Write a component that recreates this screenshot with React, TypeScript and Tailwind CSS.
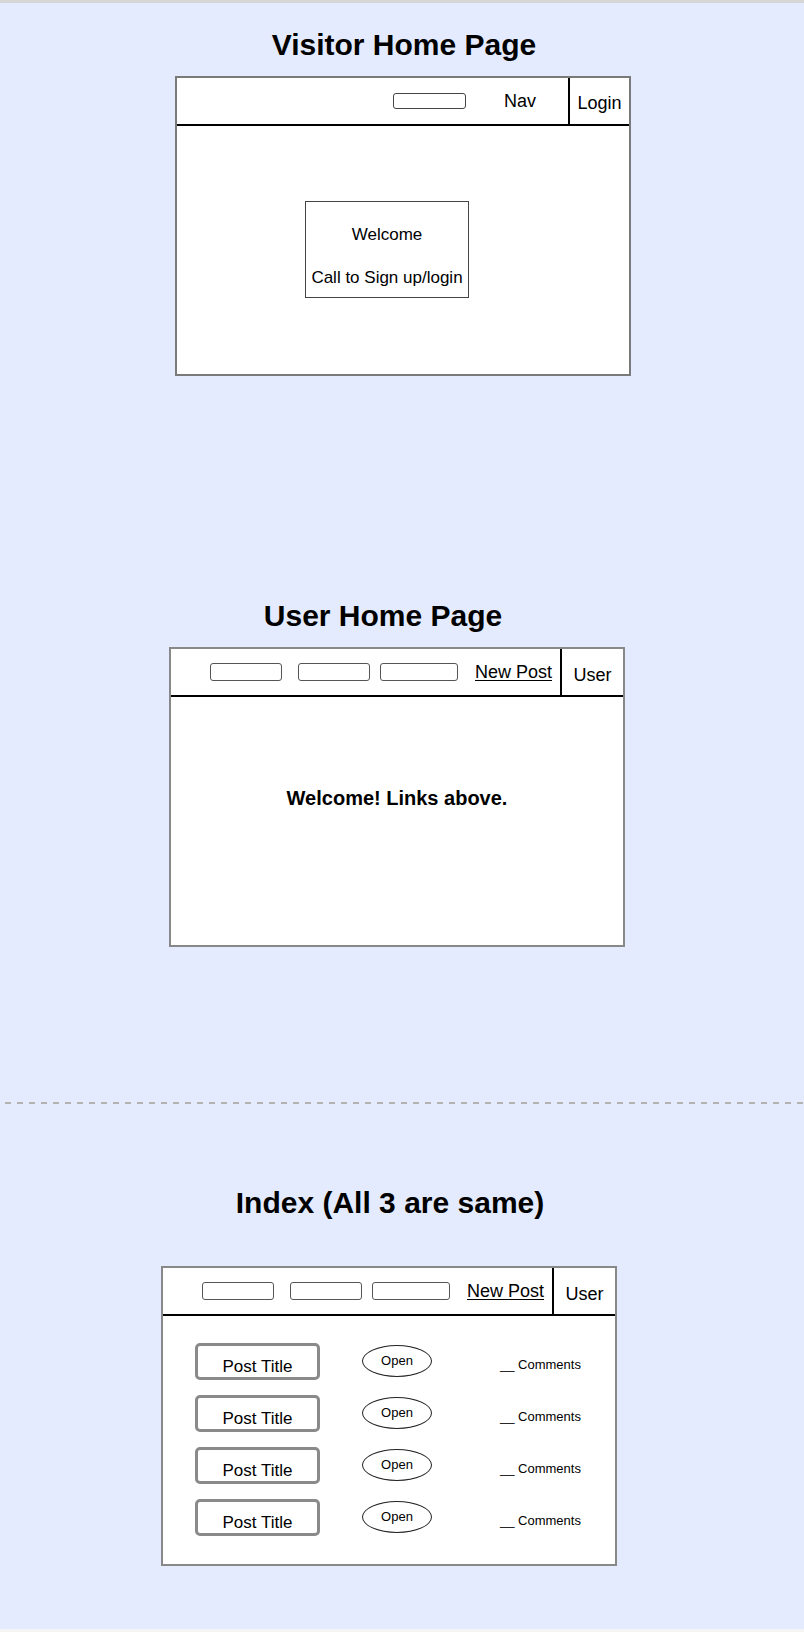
import React from "react";

const font = "font-['Liberation_Sans','Arial',sans-serif]";

function NavBox({ w }: { w: string }) {
  return <div className={`${w} h-[18px] shrink-0 rounded-[3px] border border-[#555] bg-white`} />;
}

function UserHeader() {
  return (
    <div className="flex h-[48px] items-center border-b-2 border-black pl-[39px]">
      <NavBox w="w-[72px]" />
      <div className="w-[16px] shrink-0" />
      <NavBox w="w-[72px]" />
      <div className="w-[10px] shrink-0" />
      <NavBox w="w-[78px]" />
      <div className="w-[17px] shrink-0" />
      <span className="text-[18px] leading-none text-black underline underline-offset-2">New Post</span>
      <div className="w-[8px] shrink-0" />
      <div className="w-[2px] self-stretch bg-black" />
      <div className="flex-1 pt-[5px] text-center text-[18px] leading-none text-black">User</div>
    </div>
  );
}

function PostRow() {
  return (
    <div className="flex h-[37px] items-center">
      <div className="flex h-[37px] w-[125px] shrink-0 items-center justify-center rounded-[5px] border-[3px] border-[#8a8a8a] pt-[10px] text-[17px] leading-none text-black">
        Post Title
      </div>
      <div className="ml-[42px] flex h-[32px] w-[70px] shrink-0 -translate-y-[1px] items-center justify-center rounded-[50%] border border-[#222] text-[13px] leading-none text-black">
        Open
      </div>
      <div className="ml-[68px] pt-[6px] text-[13px] leading-none text-black">__ Comments</div>
    </div>
  );
}

export default function App() {
  return (
    <div className={`${font} h-[1632px] w-full border-t-[3px] border-b-[3px] border-t-[#d6d6d6] border-b-[#f4f4f4] bg-[#e4ebfe]`}>
      {/* Visitor */}
      <h1 className="ml-[176px] mt-[24px] w-[456px] text-center text-[30px] font-bold leading-[36px] text-black">
        Visitor Home Page
      </h1>
      <div className="ml-[175px] mt-[13px] h-[300px] w-[456px] border-2 border-[#7a7a7a] bg-white">
        <div className="flex h-[48px] items-center border-b-2 border-black">
          <div className="flex-1" />
          <div className="h-[16px] w-[73px] rounded-[3px] border border-[#444]" />
          <span className="ml-[38px] text-[18px] leading-none text-black">Nav</span>
          <div className="ml-[32px] w-[2px] self-stretch bg-black" />
          <div className="w-[59px] pt-[4px] text-center text-[18px] leading-none text-black">Login</div>
        </div>
        <div className="ml-[128px] mt-[75px] flex h-[97px] w-[164px] flex-col items-center border border-[#444] text-[17px] leading-none text-black">
          <span className="mt-[24px]">Welcome</span>
          <span className="mt-[26px]">Call to Sign up/login</span>
        </div>
      </div>

      {/* User */}
      <h1 className="ml-[155px] mt-[222px] w-[456px] text-center text-[30px] font-bold leading-[36px] text-black">
        User Home Page
      </h1>
      <div className="ml-[169px] mt-[13px] h-[300px] w-[456px] border-2 border-[#888] bg-white">
        <UserHeader />
        <p className="pt-[89px] text-center text-[20px] font-bold leading-[24px] text-black">Welcome! Links above.</p>
      </div>

      {/* divider */}
      <div className="mt-[155px] h-[2px] w-full bg-[repeating-linear-gradient(90deg,transparent_0_5px,#b3b3b3_5px_11px,transparent_11px_12px)] [background-size:12px_2px]" />

      {/* Index */}
      <h1 className="ml-[162px] mt-[81px] w-[456px] text-center text-[30px] font-bold leading-[36px] text-black">
        Index (All 3 are same)
      </h1>
      <div className="ml-[161px] mt-[45px] h-[300px] w-[456px] border-2 border-[#888] bg-white">
        <UserHeader />
        <div className="flex flex-col gap-[15px] pl-[32px] pt-[27px]">
          <PostRow />
          <PostRow />
          <PostRow />
          <PostRow />
        </div>
      </div>
    </div>
  );
}
